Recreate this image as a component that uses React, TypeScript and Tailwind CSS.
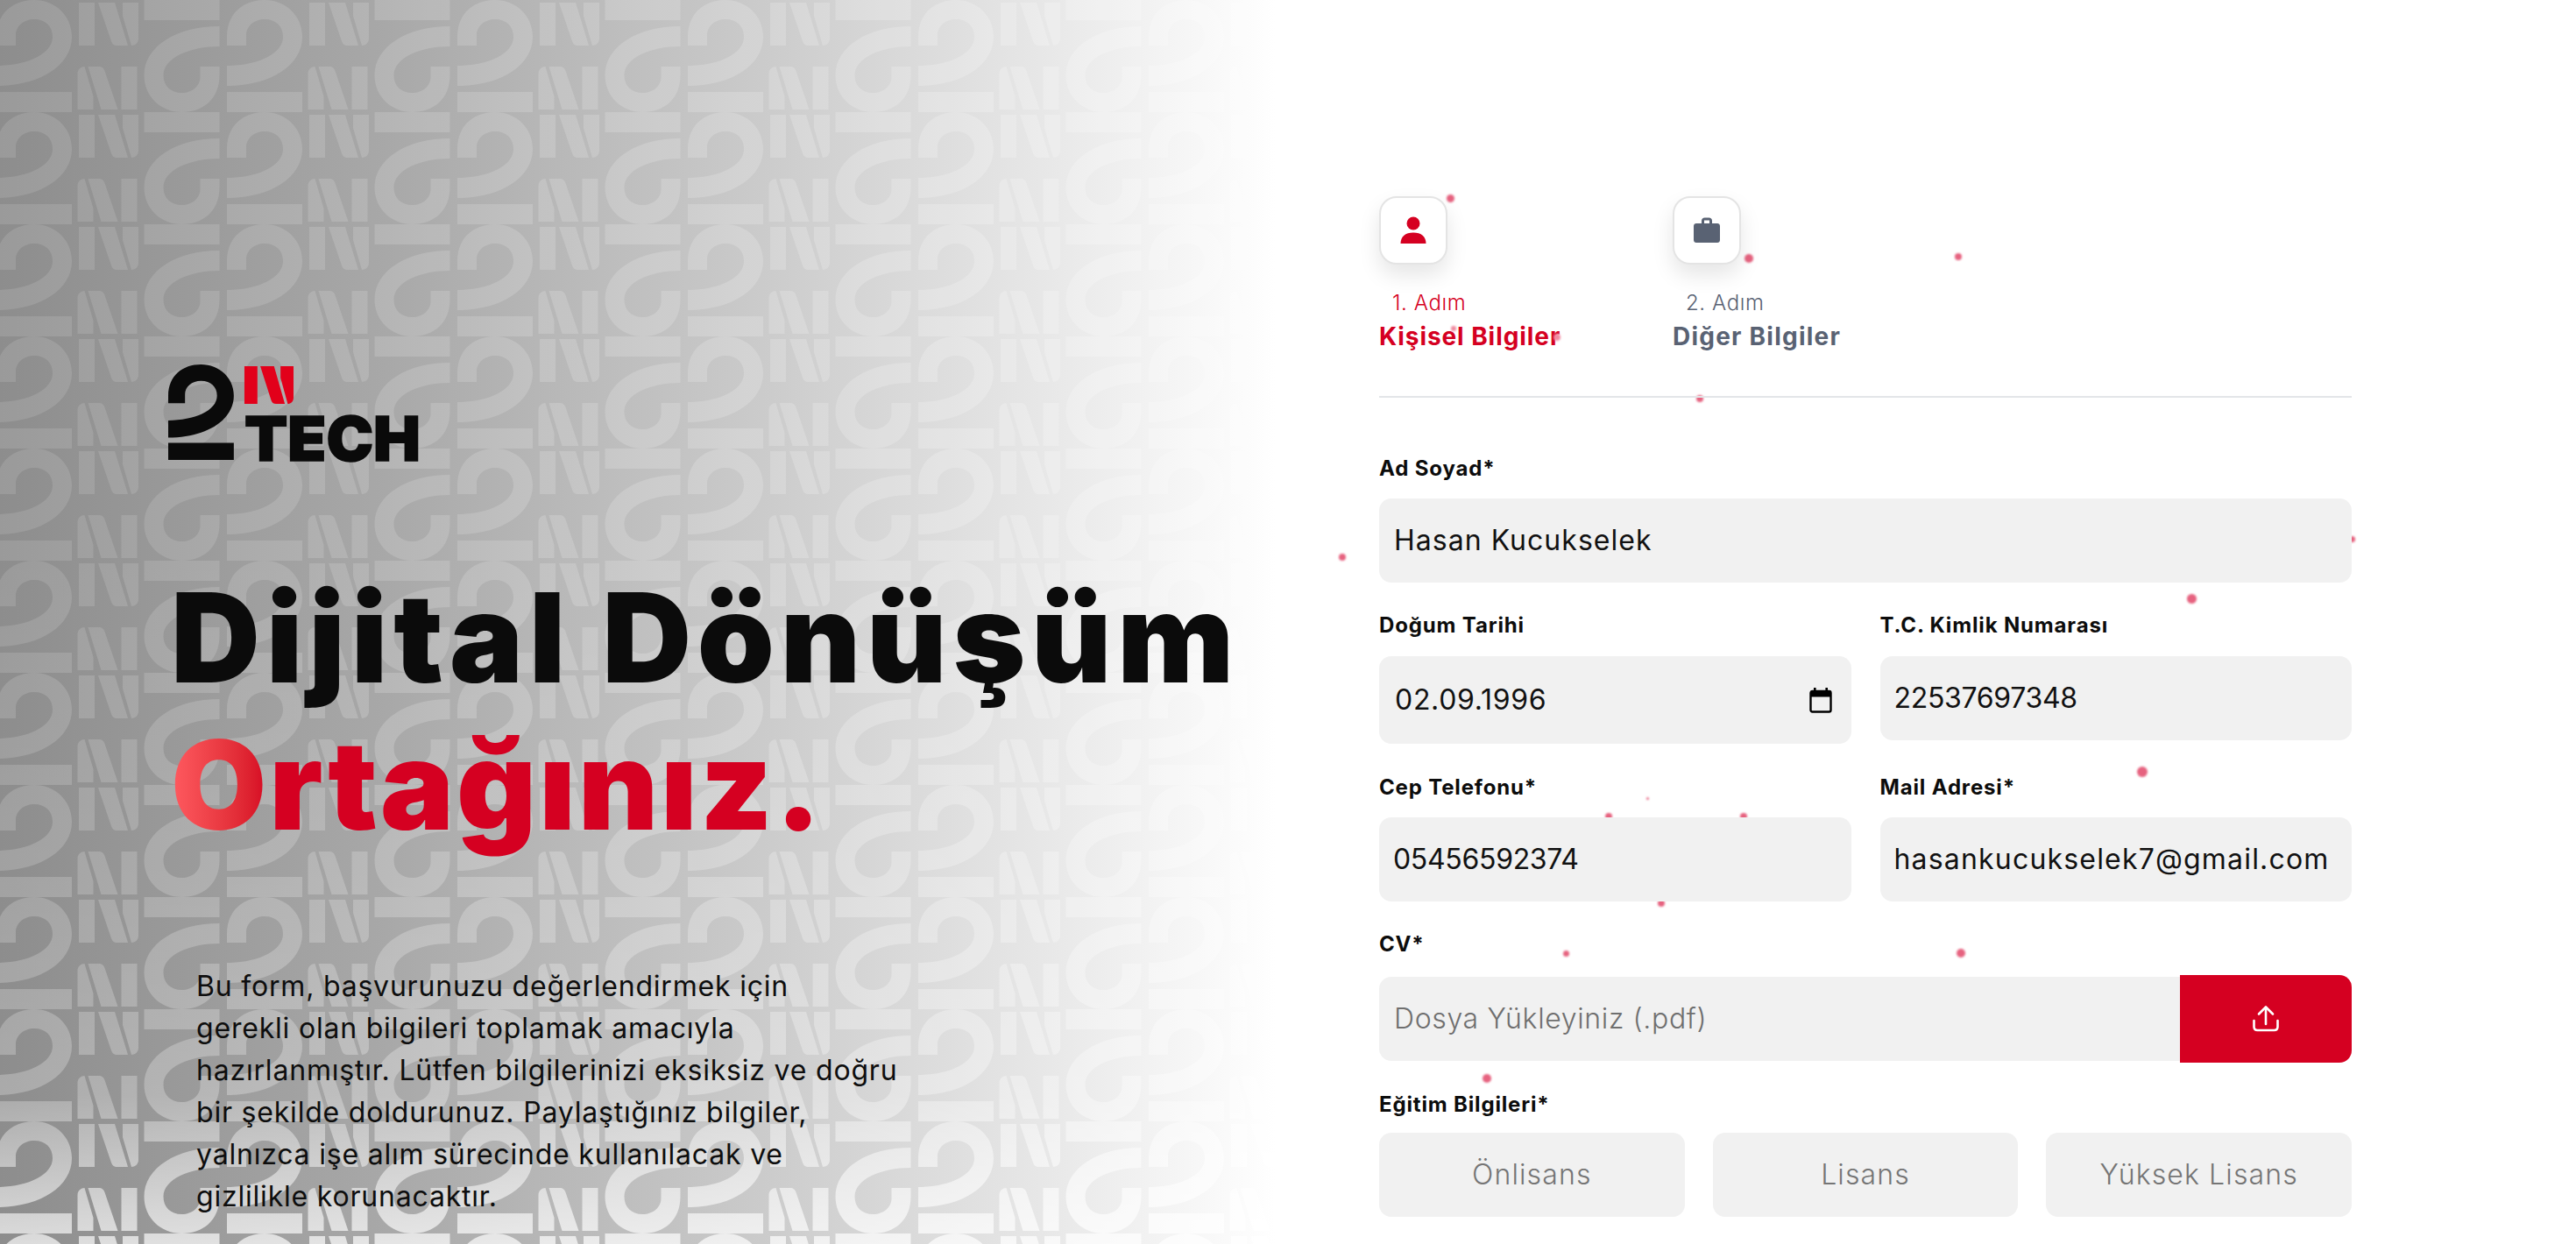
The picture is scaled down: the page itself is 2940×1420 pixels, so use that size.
import React from "react";

const TWO = "M-4 52 L-4 42 C-4 15 15 0 39 0 C63 0 82 18 82 42 C82 75 45 98 -4 98 L-4 75 C30 75 60 62 60 42 C60 30 52 22 39 22 C27 22 18 30 18 40 L18 52 Z M-4 105 H82 V128 H-4 Z";
const IN = "M90 3 H108 V52 H90 Z M112 3 H131 L146 52 H134 C130 52 128 50 127 47 Z M140 3 H158 V44 C158 49 154 52 150 52 L140 18 Z";

function Group() {
  return (
    <>
      <path d={TWO} />
      <path d={IN} />
    </>
  );
}

function Tile() {
  return (
    <>
      <Group />
      <g transform="translate(263 0)"><Group /></g>
      <g transform="rotate(180 123.25 64)"><Group /></g>
      <g transform="translate(263 0) rotate(180 123.25 64)"><Group /></g>
      <g transform="translate(-263 0) rotate(180 123.25 64)"><Group /></g>
    </>
  );
}

function Background() {
  return (
    <svg className="absolute inset-0 h-full w-full" viewBox="0 0 1470 1420" preserveAspectRatio="none">
      <defs>
        <linearGradient id="bg" gradientUnits="userSpaceOnUse" x1="0" y1="0" x2="1470" y2="0">
          <stop offset="0" stopColor="#8d8d8d" />
          <stop offset="0.3" stopColor="#a8a8a8" />
          <stop offset="0.6" stopColor="#cccccc" />
          <stop offset="0.8" stopColor="#e6e6e6" />
          <stop offset="0.99" stopColor="#ffffff" />
          <stop offset="1" stopColor="#ffffff" />
        </linearGradient>
        <linearGradient id="mh" gradientUnits="userSpaceOnUse" x1="0" y1="0" x2="1470" y2="0">
          <stop offset="0" stopColor="#1e1e1e" />
          <stop offset="1" stopColor="#3c3c3c" />
        </linearGradient>
        <linearGradient id="mv" gradientUnits="userSpaceOnUse" x1="0" y1="0" x2="0" y2="1420">
          <stop offset="0" stopColor="#fff" stopOpacity="0" />
          <stop offset="0.45" stopColor="#fff" stopOpacity="0" />
          <stop offset="0.7" stopColor="#fff" stopOpacity="0.07" />
          <stop offset="0.88" stopColor="#fff" stopOpacity="0.16" />
          <stop offset="1" stopColor="#fff" stopOpacity="0.65" />
        </linearGradient>
        <mask id="fade" maskUnits="userSpaceOnUse" x="0" y="0" width="1470" height="1420">
          <rect width="1470" height="1420" fill="url(#mh)" />
          <rect width="1470" height="1420" fill="url(#mv)" />
        </mask>
        <pattern id="tile" patternUnits="userSpaceOnUse" width="263" height="128">
          <g fill="#ffffff"><Tile /></g>
        </pattern>
      </defs>
      <rect width="1470" height="1420" fill="url(#bg)" />
      <rect width="1470" height="1420" fill="url(#tile)" mask="url(#fade)" />
    </svg>
  );
}

function Logo() {
  return (
    <svg width="290" height="130" viewBox="0 0 290 130" className="block">
      <g transform="translate(3.5 0) scale(0.87 0.852)" fill="#0a0a0a"><path d={TWO} /></g>
      <g transform="translate(12.8 -0.6) scale(0.824 0.878)" fill="#e2001a"><path d={IN} /></g>
      <text x="87" y="109.5" fontFamily="Inter, sans-serif" fontWeight="900" fontSize="70" textLength="201" lengthAdjust="spacingAndGlyphs" fill="#0a0a0a" stroke="#0a0a0a" strokeWidth="1.5">TECH</text>
    </svg>
  );
}

const paragraph = [
  "Bu form, başvurunuzu değerlendirmek için",
  "gerekli olan bilgileri toplamak amacıyla",
  "hazırlanmıştır. Lütfen bilgilerinizi eksiksiz ve doğru",
  "bir şekilde doldurunuz. Paylaştığınız bilgiler,",
  "yalnızca işe alım sürecinde kullanılacak ve",
  "gizlilikle korunacaktır.",
];

const dots = [
  { x: 1655, y: 226, d: 9 }, { x: 1996, y: 295, d: 10 }, { x: 2235, y: 293, d: 8 },
  { x: 1940, y: 455, d: 8 }, { x: 1532, y: 636, d: 8 }, { x: 2684, y: 615, d: 7 },
  { x: 2501, y: 683, d: 11 }, { x: 2445, y: 881, d: 12 }, { x: 1880, y: 911, d: 3 },
  { x: 1836, y: 932, d: 8 }, { x: 1990, y: 932, d: 8 }, { x: 1896, y: 1031, d: 8 },
  { x: 1787, y: 1088, d: 7 }, { x: 2238, y: 1088, d: 10 }, { x: 1697, y: 1231, d: 10 },
];

const box = "h-[96px] rounded-[14px] bg-[#f1f1f1] flex items-center text-[32px] whitespace-nowrap";
const label = "h-[32px] flex items-center text-[24px] leading-[32px] font-bold text-[#0c0c0c] tracking-[0.035em] whitespace-nowrap";

function PersonIcon() {
  return (
    <svg width="30" height="32" viewBox="0 0 30 32" fill="#d50021">
      <circle cx="15" cy="8" r="7.5" />
      <path d="M0.5 31 C0.5 23 6 18.5 15 18.5 C24 18.5 29.5 23 29.5 31 Z" />
    </svg>
  );
}

function CaseIcon() {
  return (
    <svg width="30" height="30" viewBox="0 0 30 30" fill="#596273">
      <path fillRule="evenodd" d="M9 7 V4 C9 2 10.5 0.5 12.5 0.5 H17.5 C19.5 0.5 21 2 21 4 V7 H27 C28.7 7 30 8.3 30 10 V26 C30 28 28.7 29 27 29 H3 C1.3 29 0 28 0 26 V10 C0 8.3 1.3 7 3 7 Z M12 7 H18 V3.5 H12 Z" />
    </svg>
  );
}

function CalendarIcon() {
  return (
    <svg width="26" height="29" viewBox="0 0 26 29" fill="none">
      <rect x="1.5" y="4" width="23" height="23.5" rx="2" stroke="#000" strokeWidth="2.4" />
      <rect x="1.5" y="3.5" width="23" height="7" fill="#000" />
      <rect x="5" y="0" width="2.6" height="5" fill="#000" />
      <rect x="18.4" y="0" width="2.6" height="5" fill="#000" />
    </svg>
  );
}

function UploadIcon() {
  return (
    <svg width="32" height="32" viewBox="0 0 32 32" fill="none" stroke="#fff" strokeWidth="2.6" strokeLinecap="round" strokeLinejoin="round">
      <path d="M16 22 V3" />
      <path d="M8 10.5 L16 2.5 L24 10.5" />
      <path d="M2.5 18 V25 C2.5 27.5 4 29 6.5 29 H25.5 C28 29 29.5 27.5 29.5 25 V18" />
    </svg>
  );
}

function Step({ icon, no, name, color, nameClass }: { icon: React.ReactNode; no: string; name: string; color: string; nameClass: string }) {
  return (
    <div className={`w-[335px] ${color}`}>
      <div className="w-[78px] h-[78px] rounded-[20px] border-2 border-[#e4e4e4] bg-white flex items-center justify-center shadow-[0_12px_24px_rgba(0,0,0,0.1)]">
        {icon}
      </div>
      <div className="mt-[28px] h-[32px] pl-[15px] text-[24px] leading-[32px] font-light tracking-[0.025em] whitespace-nowrap">{no}</div>
      <div className={`mt-[4px] h-[36px] text-[28px] leading-[36px] font-bold whitespace-nowrap ${nameClass}`}>{name}</div>
    </div>
  );
}

export default function App() {
  return (
    <div className="relative flex w-full h-[1420px] overflow-hidden bg-white font-['Inter',sans-serif]">
      <div className="relative w-[1470px] shrink-0">
        <Background />
        <div className="relative pt-[416px] pl-[192px]">
          <Logo />
          <h1 className="mt-[98px] ml-[3px] text-[141px] leading-[168px] font-black whitespace-nowrap text-[#0b0b0b]">
            <span className="block tracking-[0.048em]">Dijital Dönüşüm</span>
            <span className="block tracking-[0.02em]">
              <span className="bg-gradient-to-r from-[#ff5a60] to-[#d50021] bg-clip-text text-transparent">O</span>
              <span className="text-[#d50021]">rtağınız.</span>
            </span>
          </h1>
          <div className="mt-[122px] ml-[32px] text-[32px] leading-[48px] font-normal tracking-[0.025em] text-[#0e0e0e]">
            {paragraph.map((l) => (
              <div key={l} className="whitespace-nowrap">{l}</div>
            ))}
          </div>
        </div>
      </div>

      {dots.map((o) => (
        <span
          key={o.x}
          className="absolute rounded-full bg-[#e6627f] blur-[1px]"
          style={{ left: o.x - o.d / 2, top: o.y - o.d / 2, width: o.d, height: o.d }}
        />
      ))}

      <div className="relative z-10 flex-1 pt-[224px] pl-[104px] pr-[256px]">
        <div className="flex">
          <Step icon={<PersonIcon />} no="1. Adım" name="Kişisel Bilgiler" color="text-[#d50021]" nameClass="tracking-[0.033em]" />
          <Step icon={<CaseIcon />} no="2. Adım" name="Diğer Bilgiler" color="text-[#596273]" nameClass="tracking-[0.044em]" />
        </div>
        <div className="mt-[50px] h-[2px] bg-[#e3e5e8]" />

        <div className={`mt-[65px] ${label}`}>Ad Soyad*</div>
        <div className={`mt-[18px] px-[17px] text-[#111111] tracking-[0.032em] ${box}`}>Hasan Kucukselek</div>

        <div className="mt-[33px] grid grid-cols-2 gap-x-[33px] items-start">
          <div>
            <div className={label}>Doğum Tarihi</div>
            <div className="mt-[19px] pl-[18px] pr-[22px] h-[100px] rounded-[14px] bg-[#f1f1f1] flex items-center justify-between text-[32px] text-[#111111] tracking-[0.022em] whitespace-nowrap">
              <span>02.09.1996</span>
              <CalendarIcon />
            </div>
          </div>
          <div>
            <div className={label}>T.C. Kimlik Numarası</div>
            <div className={`mt-[19px] px-[16px] text-[#111111] tracking-[-0.01em] ${box}`}>22537697348</div>
          </div>
        </div>

        <div className="mt-[34px] grid grid-cols-2 gap-x-[33px]">
          <div>
            <div className={label}>Cep Telefonu*</div>
            <div className={`mt-[18px] px-[16px] text-[#111111] tracking-[-0.01em] ${box}`}>05456592374</div>
          </div>
          <div>
            <div className={label}>Mail Adresi*</div>
            <div className={`mt-[18px] px-[16px] text-[#111111] tracking-[0.037em] ${box}`}>hasankucukselek7@gmail.com</div>
          </div>
        </div>

        <div className={`mt-[33px] ${label}`}>CV*</div>
        <div className="mt-[19px] flex items-center h-[100px]">
          <div className={`flex-1 px-[17px] rounded-r-none font-light text-[#6f6f6f] tracking-[0.02em] ${box}`}>Dosya Yükleyiniz (.pdf)</div>
          <div className="w-[196px] h-[100px] rounded-r-[14px] bg-[#d50021] flex items-center justify-center">
            <UploadIcon />
          </div>
        </div>

        <div className={`mt-[32px] ${label}`}>Eğitim Bilgileri*</div>
        <div className="mt-[16px] grid grid-cols-3 gap-x-[32px]">
          {["Önlisans", "Lisans", "Yüksek Lisans"].map((t) => (
            <div key={t} className={`justify-center font-light text-[#757575] tracking-[0.035em] ${box}`}>{t}</div>
          ))}
        </div>
      </div>

      <span className="absolute z-20 left-[1773px] top-[381px] w-[8px] h-[8px] rounded-full bg-[#f08aa0] blur-[1px]" />
      <span className="absolute z-20 left-[1656px] top-[372px] w-[6px] h-[6px] rounded-full bg-[#f08aa0] blur-[1px]" />
    </div>
  );
}
